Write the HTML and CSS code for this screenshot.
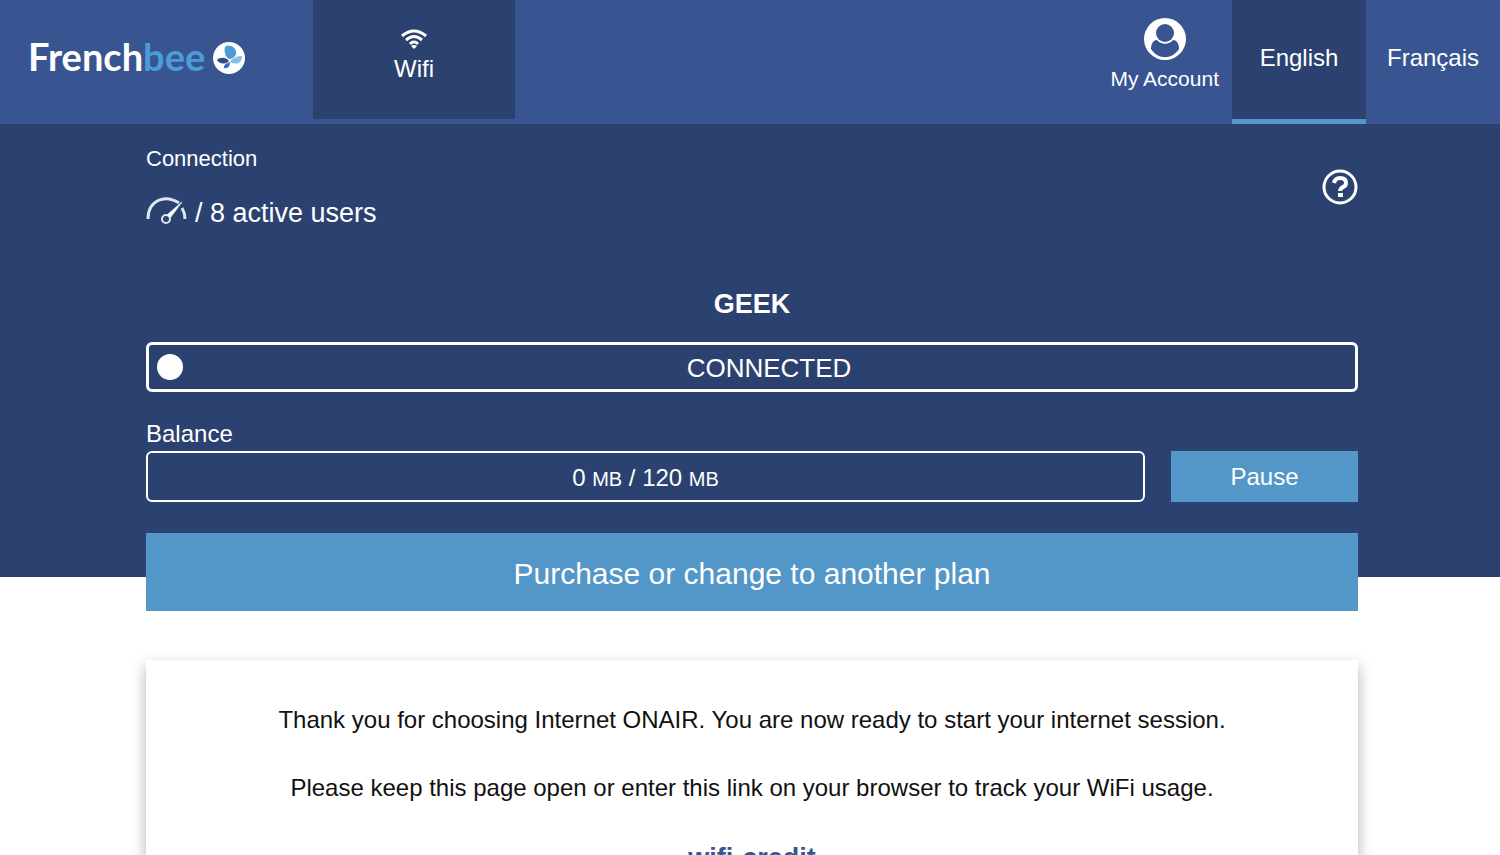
FILE: index.html
```html
<!DOCTYPE html>
<html lang="en">
<head>
    <meta charset="UTF-8">
    <meta name="viewport" content="width=device-width, initial-scale=1.0">
    <title>Frenchbee Wifi</title>
    <link rel="stylesheet" href="styles.css">
</head>
<body>
    <header class="header">
        <a class="logo" href="#">
            <span class="logo-text">French<span class="logo-bee">bee</span></span>
            <svg class="logo-icon" viewBox="0 0 32 32" aria-hidden="true">
                <circle cx="16" cy="16" r="16" fill="#fff"/>
                <path d="M16 17 C12 15 10 6 13 4 C17 2 24 6 23 11 C23 15 19 17 16 17Z" fill="#4b9cd8"/>
                <path d="M17 20 C20 15 25 14 29 14 C29 20 25 24 17 20Z" fill="#86c1e8"/>
                <path d="M16 19 C13 15 7 15 4 18 C6 22 12 23 16 19Z" fill="#2d4c86"/>
                <path d="M17 20 C14 21 10 23 11 26 C15 27 17 24 17 20Z" fill="#396fae"/>
            </svg>
        </a>
        <nav class="menu">
            <a class="menu-item" href="#">
                <svg class="wifi-icon" viewBox="0 0 26 20" aria-hidden="true">
                    <g fill="none" stroke="#fff" stroke-width="3">
                        <path d="M1 7 Q13 -3 25 7"/>
                        <path d="M5 11 Q13 4 21 11"/>
                        <path d="M9 15 Q13 11 17 15"/>
                    </g>
                    <path d="M10 17 Q13 15 16 17 L13 20Z" fill="#fff"/>
                </svg>
                <span>Wifi</span>
            </a>
        </nav>
        <a class="account" href="#">
            <svg class="account-icon" viewBox="0 0 42 42" aria-hidden="true">
                <circle cx="21" cy="21" r="21" fill="#fff"/>
                <path d="M7 31 C7 26 9 22 13 22 C17 27 25 27 29 22 C33 22 35 26 35 31 C28 42 14 42 7 31Z" fill="#385592"/>
                <ellipse cx="21" cy="15" rx="9" ry="9" fill="#385592"/>
            </svg>
            <span>My Account</span>
        </a>
        <nav class="languages">
            <a class="language active" href="#">English</a>
            <a class="language" href="#">Français</a>
        </nav>
    </header>

    <section class="session">
        <div class="connection">
            <div>
                <p class="connection-title">Connection</p>
                <p class="users">
                    <svg class="gauge-icon" viewBox="0 0 41 28" aria-hidden="true">
                        <g fill="none" stroke="#dfe5f3">
                            <path d="M2 22 C2 3 19 -3 33 6" stroke-width="3"/>
                            <path d="M36 11 Q39 16 39 22" stroke-width="3"/>
                            <circle cx="20" cy="22" r="4" stroke-width="2"/>
                        </g>
                        <path d="M21 18 L36 5 L24 21Z" fill="#fff" stroke="#dfe5f3"/>
                    </svg>
                    <span>/ 8 active users</span>
                </p>
            </div>
            <button type="button" class="help" aria-label="Help">
                <svg viewBox="0 0 36 36" aria-hidden="true">
                    <circle cx="18" cy="18" r="16" fill="none" stroke="#fff" stroke-width="3"/>
                    <path d="M12 14 Q13 9 18 9 Q24 9 24 14 Q24 17 21 18 Q18 20 18 22" fill="none" stroke="#fff" stroke-width="4"/>
                    <rect x="16" y="24" width="5" height="4" fill="#fff"/>
                </svg>
            </button>
        </div>

        <h1 class="plan">GEEK</h1>
        <div class="status">
            <span class="dot"></span>
            <span class="status-text">CONNECTED</span>
        </div>

        <p class="balance-title">Balance</p>
        <div class="balance">
            <div class="balance-bar"><span>0 <small>MB</small> / 120 <small>MB</small></span></div>
            <button type="button" class="pause">Pause</button>
        </div>
        <button type="button" class="purchase">Purchase or change to another plan</button>
    </section>

    <main class="card">
        <p>Thank you for choosing Internet ONAIR. You are now ready to start your internet session.</p>
        <p>Please keep this page open or enter this link on your browser to track your WiFi usage.</p>
        <p class="credit"><a href="#">wifi-credit</a></p>
    </main>
</body>
</html>
```
FILE: styles.css
```css
* {
    box-sizing: border-box;
}

body {
    margin: 0;
    font-family: "Liberation Sans", Arial, sans-serif;
    font-size: 24px;
    background-color: #fff;
    color: #111;
}

p, h1 {
    margin: 0;
}

a {
    color: inherit;
    text-decoration: none;
}

button {
    border: 0;
    padding: 0;
    font-family: inherit;
    color: #fff;
    background-color: #5396c8;
    cursor: pointer;
}

svg {
    display: block;
}

/* Header */
.header {
    display: flex;
    height: 124px;
    background-color: #385592;
    color: #fff;
}

.logo {
    display: flex;
    align-items: center;
    gap: 8px;
    width: 313px;
    padding: 0 0 8px 28px;
}

.logo-text {
    padding-bottom: 4px;
    font-family: Lato, sans-serif;
    font-size: 38px;
    font-weight: bold;
}

.logo-bee {
    color: #4b9cd8;
}

.logo-icon {
    width: 32px;
    height: 32px;
}

.menu {
    flex: 1;
}

.menu-item {
    display: flex;
    flex-direction: column;
    align-items: center;
    gap: 6px;
    width: 202px;
    height: 119px;
    padding-top: 29px;
    background-color: #2b4271;
}

.wifi-icon {
    width: 26px;
    height: 20px;
}

.account {
    display: flex;
    flex-direction: column;
    align-items: center;
    gap: 7px;
    padding: 18px 13px 0;
    font-size: 21px;
}

.account-icon {
    width: 42px;
    height: 42px;
}

.languages {
    display: flex;
}

.language {
    display: flex;
    align-items: center;
    justify-content: center;
    width: 134px;
    padding-bottom: 4px;
    border-bottom: 5px solid transparent;
}

.language.active {
    background-color: #2b4271;
    border-color: #5396c8;
}

/* Session status */
.session {
    display: flex;
    flex-direction: column;
    padding: 21px 142px 0 146px;
    background-color: #2b4271;
    color: #fff;
}

.connection {
    display: flex;
    justify-content: space-between;
    align-items: center;
}

.connection-title {
    font-size: 22px;
    line-height: 28px;
}

.users {
    display: flex;
    align-items: center;
    gap: 8px;
    margin-top: 24px;
    font-size: 27px;
    line-height: 32px;
}

.gauge-icon {
    width: 41px;
    height: 28px;
    margin-bottom: 4px;
}

.help {
    width: 36px;
    height: 36px;
    background: none;
}

.plan {
    margin-top: 59px;
    font-size: 27px;
    line-height: 32px;
    text-align: center;
}

.status {
    display: flex;
    align-items: center;
    gap: 8px;
    height: 50px;
    margin-top: 22px;
    padding: 0 8px;
    border: 3px solid #fff;
    border-radius: 6px;
    font-size: 26px;
}

.dot {
    width: 26px;
    height: 26px;
    border-radius: 50%;
    background-color: #fff;
}

.status-text {
    flex: 1;
    padding-top: 3px;
    text-align: center;
}

.balance-title {
    margin-top: 27px;
    line-height: 30px;
}

.balance {
    display: flex;
    gap: 26px;
    height: 51px;
    margin-top: 2px;
}

.balance-bar {
    flex: 1;
    display: flex;
    align-items: center;
    justify-content: center;
    padding-top: 3px;
    border: 2px solid #fff;
    border-radius: 6px;
}

.balance-bar small {
    font-size: 20px;
}

.pause {
    width: 187px;
    font-size: 24px;
}

.purchase {
    height: 78px;
    margin-top: 31px;
    margin-bottom: -34px;
    padding-top: 3px;
    font-size: 30px;
}

/* Message */
.card {
    margin: 83px 142px 40px 146px;
    padding: 44px 20px;
    background-color: #fff;
    box-shadow: 0 6px 14px rgba(0, 0, 0, 0.3);
    text-align: center;
    line-height: 32px;
}

.card p {
    margin-bottom: 36px;
}

.card .credit {
    font-size: 27px;
    font-weight: bold;
    line-height: 36px;
    color: #385592;
}
```
